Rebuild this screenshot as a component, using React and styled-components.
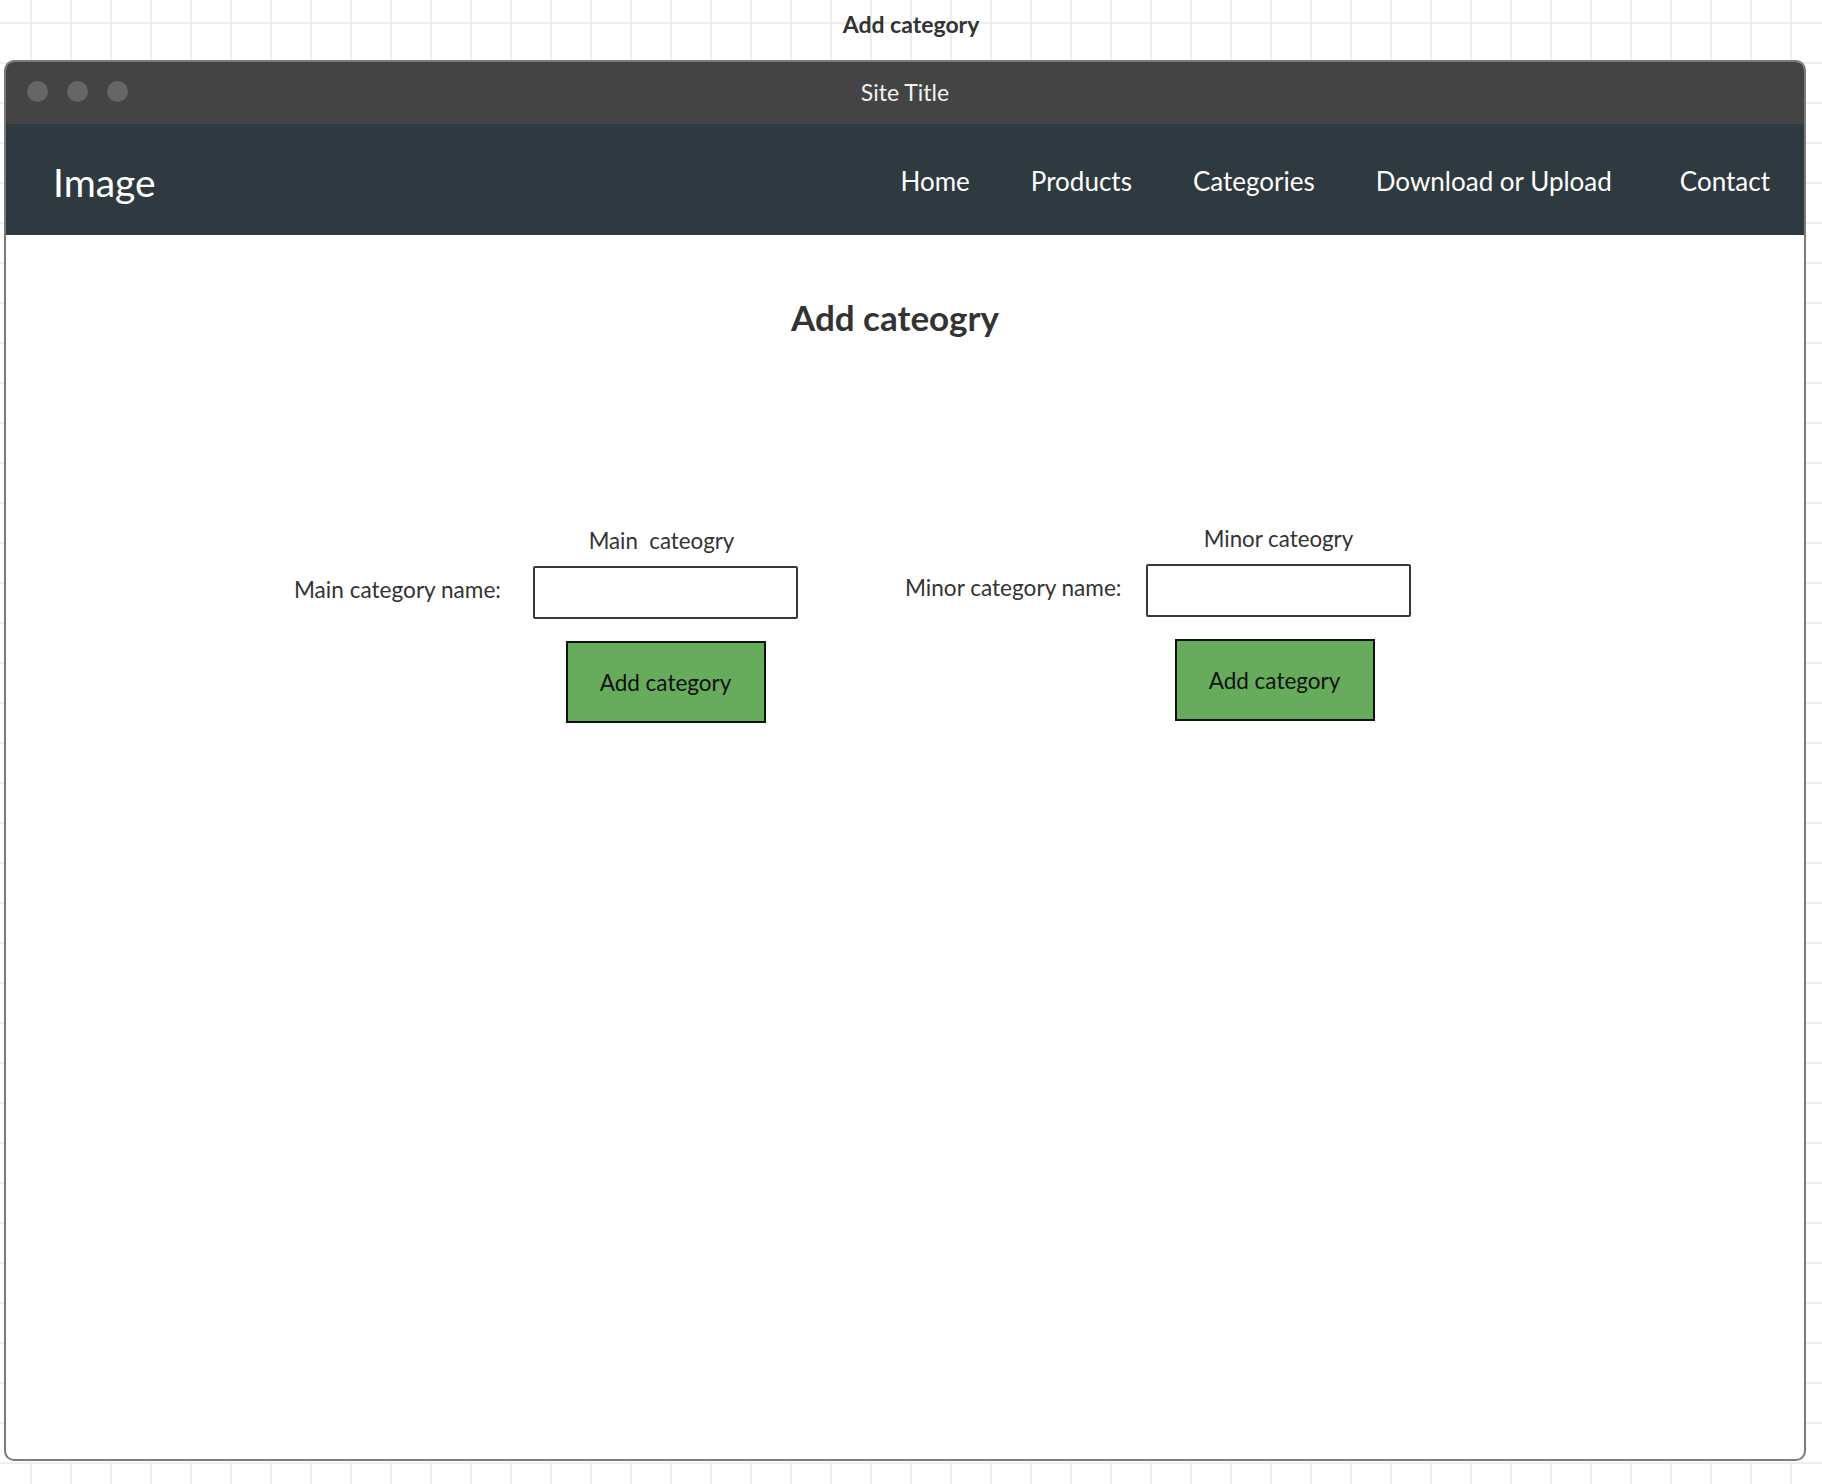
import React from 'react';
import styled, { createGlobalStyle } from 'styled-components';

const GlobalStyle = createGlobalStyle`
  body {
    margin: 0;
    font-family: Lato, "Open Sans", sans-serif;
    color: #333;
  }
`;

const Canvas = styled.div`
  width: 1822px;
  height: 1484px;
  box-sizing: border-box;
  padding-top: 10px;
  background-color: #fff;
  background-image:
    linear-gradient(to right, #eeeeee 2px, transparent 2px),
    linear-gradient(to bottom, #eeeeee 2px, transparent 2px);
  background-size: 40px 40px;
  background-position: 30px 22px;
  overflow: hidden;
`;

const PageLabel = styled.div`
  text-align: center;
  font-weight: 700;
  font-size: 23px;
  line-height: 28px;
  color: #333;
`;

const Window = styled.div`
  margin: 22px 0 0 4px;
  width: 1802px;
  height: 1401px;
  box-sizing: border-box;
  border: 2px solid #7b7b7b;
  border-radius: 10px;
  background: #fff;
  overflow: hidden;
  display: flex;
  flex-direction: column;
`;

const TitleBar = styled.div`
  height: 62px;
  background: #444444;
  display: grid;
  grid-template-columns: 1fr auto 1fr;
  align-items: center;
  padding: 0 21px;
`;

const Dots = styled.div`
  display: flex;
  gap: 19px;
  margin-top: -4px;
`;

const Dot = styled.span`
  width: 21px;
  height: 21px;
  border-radius: 50%;
  background: #666;
`;

const SiteTitle = styled.div`
  color: #f2f2f2;
  font-size: 23px;
  line-height: 28px;
  margin-top: -2px;
`;

const NavBar = styled.nav`
  height: 111px;
  background: #2e3940;
  display: flex;
  align-items: center;
  justify-content: space-between;
  padding: 0 34px 0 47px;
`;

const Logo = styled.div`
  color: #fff;
  font-size: 39px;
  margin-top: 4px;
`;

const NavLinks = styled.div`
  display: flex;
  gap: 61px;
`;

const NavLink = styled.a`
  color: #fff;
  font-size: 26px;
  text-decoration: none;
  margin-top: 2px;
  margin-left: ${p => (p.$extra ? 7 : 0)}px;
`;

const Content = styled.main`
  flex: 1;
  display: flex;
  flex-direction: column;
`;

const Heading = styled.h1`
  margin: 61px 20px 0 0;
  text-align: center;
  font-size: 35px;
  line-height: 42px;
  font-weight: 700;
  color: #333;
`;

const FormRow = styled.div`
  display: flex;
  gap: 107px;
  margin-top: 189px;
  padding-left: 286px;
`;

const FormGroup = styled.div`
  display: grid;
  grid-template-columns: 241px 265px;
  grid-template-rows: 28px 53px 82px;
  row-gap: 11px;
  margin-top: ${p => p.$offset || 0}px;

  & > button {
    margin-top: 11px;
  }
`;

const GroupTitle = styled.div`
  grid-column: 2;
  grid-row: 1;
  position: relative;
  left: ${p => p.$shift || 0}px;
  text-align: center;
  font-size: 22.3px;
  line-height: 28px;
  color: #333;
  white-space: pre;
`;

const FieldLabel = styled.label`
  grid-column: 1;
  grid-row: 2;
  align-self: center;
  text-align: right;
  padding-right: ${p => p.$gap}px;
  margin-bottom: 6px;
  font-size: 22.6px;
  color: #333;
  white-space: nowrap;
`;

const TextInput = styled.input`
  grid-column: 2;
  grid-row: 2;
  box-sizing: border-box;
  width: 265px;
  height: 53px;
  border: 2px solid #3a3a3a;
  border-radius: 2px;
  background: #fff;
  padding: 0 10px;
  font: inherit;
`;

const AddButton = styled.button`
  grid-column: 2;
  grid-row: 3;
  justify-self: center;
  position: relative;
  left: ${p => p.$shift || 0}px;
  width: 200px;
  height: 82px;
  box-sizing: border-box;
  border: 2px solid #111;
  background: #67ab5c;
  color: #111;
  font-family: inherit;
  font-size: 22.5px;
  cursor: pointer;
`;

const navItems = ['Home', 'Products', 'Categories', 'Download or Upload', 'Contact'];

const groups = [
  { title: 'Main  cateogry', label: 'Main category name:', gap: 32, offset: 0, titleShift: -4, shift: 0 },
  { title: 'Minor cateogry', label: 'Minor category name:', gap: 25, offset: -2, titleShift: 0, shift: -4 },
];

export default function App() {
  return (
    <>
      <GlobalStyle />
      <Canvas>
        <PageLabel>Add category</PageLabel>
        <Window>
          <TitleBar>
            <Dots>
              <Dot />
              <Dot />
              <Dot />
            </Dots>
            <SiteTitle>Site Title</SiteTitle>
            <div />
          </TitleBar>
          <NavBar>
            <Logo>Image</Logo>
            <NavLinks>
              {navItems.map(item => (
                <NavLink key={item} href="#" $extra={item === 'Contact'}>{item}</NavLink>
              ))}
            </NavLinks>
          </NavBar>
          <Content>
            <Heading>Add cateogry</Heading>
            <FormRow>
              {groups.map(g => (
                <FormGroup key={g.label} $offset={g.offset}>
                  <GroupTitle $shift={g.titleShift}>{g.title}</GroupTitle>
                  <FieldLabel $gap={g.gap}>{g.label}</FieldLabel>
                  <TextInput type="text" />
                  <AddButton type="button" $shift={g.shift}>Add category</AddButton>
                </FormGroup>
              ))}
            </FormRow>
          </Content>
        </Window>
      </Canvas>
    </>
  );
}
